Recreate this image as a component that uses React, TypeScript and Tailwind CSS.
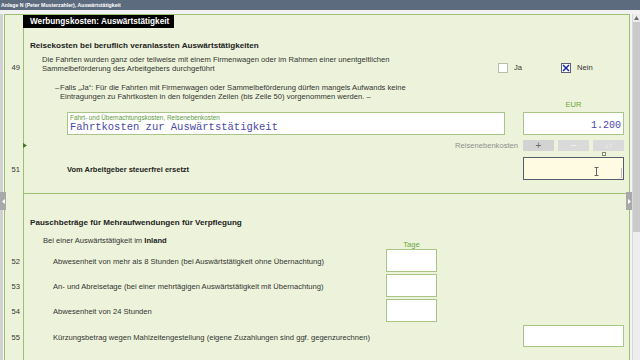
import React from "react";

const G = "border-[#9cbf74]";

function Row({ num, h, children, className = "", numTop = 0 }: { num?: string; h: string; children?: React.ReactNode; className?: string; numTop?: number }) {
  return (
    <div className={`flex shrink-0 ${h}`}>
      <div className="w-[18px] shrink-0 relative text-[7.6px] leading-[10px] text-[#333] text-right pr-[3px]">
        {num && <div style={{ paddingTop: numTop }}>{num}</div>}
      </div>
      <div className={`flex-1 border-l ${G} relative ${className}`}>{children}</div>
    </div>
  );
}

function CheckBox({ checked }: { checked?: boolean }) {
  return (
    <div className={`w-[10px] h-[10px] bg-white border ${checked ? "border-[#5a6070]" : "border-[#b8c0a8]"} flex items-center justify-center`}>
      {checked && (
        <svg width="8" height="8" viewBox="0 0 8 8">
          <path d="M1 1 L7 7 M7 1 L1 7" stroke="#1f2fa8" strokeWidth="1.6" />
        </svg>
      )}
    </div>
  );
}

export default function App() {
  return (
    <div className="w-[640px] h-[360px] overflow-hidden relative bg-[#e6e6e6] font-['Liberation_Sans',Arial,sans-serif] text-[#333]">
      <div className="h-[10px] bg-[#5d6b7f] text-white text-[5.2px] font-bold leading-[10px] pl-[1px] whitespace-nowrap">
        Anlage N (Peter Musterzahler), Auswärtstätigkeit
      </div>
      <div className="h-[4px] bg-[#f2f2f2]" />
      <div className="flex h-[346px]">
        <div className="w-[4px] bg-[#d2d2d2] border-r border-[#f4f4f4]" />
        <div className={`w-[626px] border border-b-0 ${G} bg-[#edf3da] flex flex-col`}>
          {/* title */}
          <Row h="h-[13px]">
            <div className="-ml-px w-[151px] h-[13px] bg-black text-white font-bold text-[8.2px] leading-[13px] pl-[7px] whitespace-nowrap">
              Werbungskosten: Auswärtstätigkeit
            </div>
          </Row>
          {/* heading */}
          <Row h="h-[24px]">
            <div className="pl-[6px] pt-[12px] text-[8.1px] leading-[12px] font-bold text-[#222] whitespace-nowrap">
              Reisekosten bei beruflich veranlassten Auswärtstätigkeiten
            </div>
          </Row>
          {/* 49 */}
          <Row num="49" numTop={11} h="h-[23px]" className="flex">
            <div className="w-[474px] shrink-0 pl-[18px] pt-[3px] text-[7.6px] leading-[9px] whitespace-nowrap">
              Die Fahrten wurden ganz oder teilweise mit einem Firmenwagen oder im Rahmen einer unentgeltlichen
              <br />
              Sammelbeförderung des Arbeitgebers durchgeführt
            </div>
            <div className="flex pt-[11px] text-[7.6px] leading-[10px]">
              <div className="flex w-[63px]">
                <CheckBox />
                <span className="ml-[6px]">Ja</span>
              </div>
              <div className="flex">
                <CheckBox checked />
                <span className="ml-[6px]">Nein</span>
              </div>
            </div>
          </Row>
          {/* dash paragraph */}
          <Row h="h-[25px]">
            <div className="pl-[31px] pt-[8px] text-[7.6px] leading-[9px] whitespace-nowrap flex">
              <span className="w-[5px] shrink-0">–</span>
              <div>
                Falls „Ja“: Für die Fahrten mit Firmenwagen oder Sammelbeförderung dürfen mangels Aufwands keine
                <br />
                Eintragungen zu Fahrtkosten in den folgenden Zeilen (bis Zeile 50) vorgenommen werden. –
              </div>
            </div>
          </Row>
          {/* EUR label */}
          <Row h="h-[12px]" className="flex justify-end pr-[5px]">
            <div className="w-[101px] text-center text-[7.6px] leading-[10px] text-[#6aa83c]">EUR</div>
          </Row>
          {/* input row */}
          <Row h="h-[23px]" className="flex pl-[43px] pr-[5px]">
            <div className="w-[438px] h-[23px] bg-white border border-[#a9c487] pl-[2px]">
              <div className="text-[6.4px] leading-[8px] text-[#5e9a3c] pt-[1px] whitespace-nowrap">Fahrt- und Übernachtungskosten, Reisenebenkosten</div>
              <div className="font-['Liberation_Mono',monospace] text-[10.5px] leading-[11px] text-[#4a48a6] whitespace-nowrap">Fahrtkosten zur Auswärtstätigkeit</div>
            </div>
            <div className="ml-auto w-[101px] h-[23px] bg-white border border-[#a9c487] flex items-end justify-end pr-[2px] pb-[3px]">
              <span className="font-['Liberation_Mono',monospace] text-[10px] leading-[10px] text-[#4a48a6]">1.200</span>
            </div>
          </Row>
          {/* buttons row */}
          <Row h="h-[22px]" className="flex justify-end pr-[5px]">
            <svg className="absolute -left-px top-[8px]" width="4" height="5" viewBox="0 0 4 5">
              <path d="M0 0 L4 2.5 L0 5 Z" fill="#3d7a1e" />
            </svg>
            <div className="flex items-start pt-[5px]">
              <span className="text-[7.6px] leading-[11px] text-[#8f8f8f] mr-[5px]">Reisenebenkosten</span>
              <div className="relative flex gap-[4px]">
                <div className="w-[31px] h-[11px] bg-[#d3d3d3] text-[#6a6a6a] text-[10px] leading-[11px] text-center">+</div>
                <div className="w-[31px] h-[11px] bg-[#dadada] text-[#f2f2f2] text-[10px] leading-[10px] text-center">–</div>
                <div className="w-[31px] h-[11px] bg-[#dadada] text-[#f2f2f2] text-[8px] leading-[11px] text-center">↓↑</div>
                <div className="absolute left-[79px] top-[12px] w-[4px] h-[4px] border border-[#7d8a6a] bg-[#f5f5f5]" />
              </div>
            </div>
          </Row>
          {/* 51 */}
          <Row num="51" numTop={8} h="h-[37px]" className={`flex border-b ${G} pr-[5px]`}>
            <div className="pl-[43px] pt-[8px] text-[7.5px] leading-[10px] font-bold text-[#222] whitespace-nowrap">Vom Arbeitgeber steuerfrei ersetzt</div>
            <div className="ml-auto w-[101px] h-[23px] bg-[#fffbe3] border border-[#555d6b] relative">
              <svg className="absolute left-[70px] top-[9px]" width="5" height="9" viewBox="0 0 5 9">
                <path d="M0.5 0.5 H4.5 M2.5 0.5 V8.5 M0.5 8.5 H4.5" stroke="#666" strokeWidth="1" fill="none" />
              </svg>
              <div className="absolute right-[1px] top-[10px] w-[1px] h-[10px] bg-[#bbbbbb]" />
            </div>
          </Row>
          {/* Pausch */}
          <Row h="h-[35px]">
            <div className="pl-[6px] pt-[23px] text-[8.1px] leading-[12px] font-bold text-[#222] whitespace-nowrap">
              Pauschbeträge für Mehraufwendungen für Verpflegung
            </div>
          </Row>
          {/* Inland + Tage */}
          <Row h="h-[20px]" className="flex">
            <div className="w-[362px] shrink-0 pl-[19px] pt-[7px] text-[7.6px] leading-[10px] whitespace-nowrap">
              Bei einer Auswärtstätigkeit im <b className="text-[#222]">Inland</b>
            </div>
            <div className="w-[51px] pt-[12px] text-center text-[7.6px] leading-[8px] text-[#6aa83c]">Tage</div>
          </Row>
          {[
            ["52", "Abwesenheit von mehr als 8 Stunden (bei Auswärtstätigkeit ohne Übernachtung)"],
            ["53", "An- und Abreisetage (bei einer mehrtägigen Auswärtstätigkeit mit Übernachtung)"],
            ["54", "Abwesenheit von 24 Stunden"],
          ].map(([n, t]) => (
            <Row key={n} num={n} numTop={8} h="h-[25px]" className="flex">
              <div className="w-[362px] shrink-0 pl-[29px] pt-[8px] text-[7.6px] leading-[10px] whitespace-nowrap">{t}</div>
              <div className="w-[51px] h-[23px] bg-white border border-[#a9c487]" />
            </Row>
          ))}
          <Row num="55" numTop={9} h="h-[25px]" className="flex pr-[5px]">
            <div className="pl-[29px] pt-[9px] text-[7.6px] leading-[10px] whitespace-nowrap">
              Kürzungsbetrag wegen Mahlzeitengestellung (eigene Zuzahlungen sind ggf. gegenzurechnen)
            </div>
            <div className="ml-auto mt-[1px] w-[101px] h-[22px] bg-white border border-[#a9c487]" />
          </Row>
          <Row h="flex-1" />
        </div>
        <div className="w-[2px] bg-[#f4f4f4]" />
        <div className="w-[8px] bg-[#ededed] flex flex-col border-l border-[#d8d8d8]">
          <div className="h-[8px] flex items-center justify-center">
            <svg width="5" height="4" viewBox="0 0 5 4">
              <path d="M0 4 L2.5 0 L5 4 Z" fill="#707070" />
            </svg>
          </div>
          <div className="h-[210px] bg-[#cacaca]" />
        </div>
      </div>
      {/* collapse handles */}
      <div className="absolute left-0 top-[192px] w-[6px] h-[18px] bg-[#a9a9a9] flex items-center justify-center">
        <svg width="3" height="5" viewBox="0 0 3 5">
          <path d="M3 0 L0 2.5 L3 5 Z" fill="#fff" />
        </svg>
      </div>
      <div className="absolute left-[626px] top-[192px] w-[6px] h-[18px] bg-[#a9a9a9] flex items-center justify-center">
        <svg width="3" height="5" viewBox="0 0 3 5">
          <path d="M0 0 L3 2.5 L0 5 Z" fill="#fff" />
        </svg>
      </div>
    </div>
  );
}
